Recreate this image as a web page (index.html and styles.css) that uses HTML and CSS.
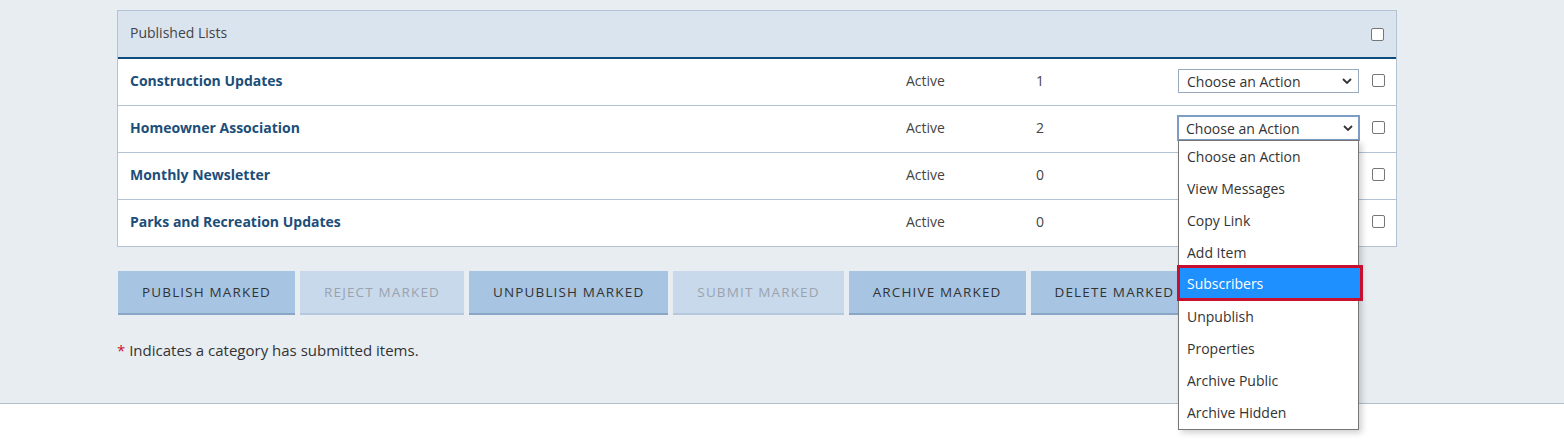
FILE: index.html
```html
<!DOCTYPE html>
<html lang="en">
<head>
    <meta charset="UTF-8">
    <meta name="viewport" content="width=device-width, initial-scale=1.0">
    <title>Published Lists</title>
    <link rel="stylesheet" href="styles.css">
</head>
<body>
    <div class="page">
        <div class="lists">
            <div class="lists-head">
                <span class="head-title">Published Lists</span>
                <span class="box"></span>
            </div>

            <div class="list-row">
                <a href="#" class="list-name">Construction Updates</a>
                <span class="cell">Active</span>
                <span class="cell">1</span>
                <span class="cell"><span class="action">Choose an Action<svg class="caret" viewBox="0 0 10 6" width="10" height="6"><path d="M1 1l4 4 4-4" fill="none" stroke="#333" stroke-width="1.8"/></svg></span></span>
                <span class="cell-box"><span class="box"></span></span>
            </div>

            <div class="list-row">
                <a href="#" class="list-name">Homeowner Association</a>
                <span class="cell">Active</span>
                <span class="cell">2</span>
                <span class="cell action-cell">
                    <span class="action action-open">Choose an Action<svg class="caret" viewBox="0 0 10 6" width="10" height="6"><path d="M1 1l4 4 4-4" fill="none" stroke="#333" stroke-width="1.8"/></svg></span>
                    <ul class="action-menu">
                        <li>Choose an Action</li>
                        <li>View Messages</li>
                        <li>Copy Link</li>
                        <li>Add Item</li>
                        <li class="selected">Subscribers</li>
                        <li>Unpublish</li>
                        <li>Properties</li>
                        <li>Archive Public</li>
                        <li>Archive Hidden</li>
                    </ul>
                </span>
                <span class="cell-box"><span class="box"></span></span>
            </div>

            <div class="list-row">
                <a href="#" class="list-name">Monthly Newsletter</a>
                <span class="cell">Active</span>
                <span class="cell">0</span>
                <span class="cell"></span>
                <span class="cell-box"><span class="box"></span></span>
            </div>

            <div class="list-row">
                <a href="#" class="list-name">Parks and Recreation Updates</a>
                <span class="cell">Active</span>
                <span class="cell">0</span>
                <span class="cell"></span>
                <span class="cell-box"><span class="box"></span></span>
            </div>
        </div>

        <div class="buttons">
            <button class="btn">Publish Marked</button>
            <button class="btn btn-off">Reject Marked</button>
            <button class="btn">Unpublish Marked</button>
            <button class="btn btn-off">Submit Marked</button>
            <button class="btn">Archive Marked</button>
            <button class="btn">Delete Marked</button>
        </div>

        <p class="note"><span class="star">*</span> Indicates a category has submitted items.</p>
    </div>
    <div class="footer"></div>
</body>
</html>
```

FILE: styles.css
```css
body {
    margin: 0;
    background-color: #fff;
    font-family: 'Open Sans', 'Liberation Sans', sans-serif;
    color: #333;
}
.page {
    position: relative;
    z-index: 2;
    background-color: #e8edf2;
    height: 404px;
    box-sizing: border-box;
    padding: 10px 167px 0 117px;
    border-bottom: 1px solid #b3bfc9;
}
.footer {
    height: 37px;
    background-color: #fff;
}
.lists {
    border: 1px solid #b4c3d3;
    background-color: #fff;
}
.lists-head {
    display: flex;
    justify-content: space-between;
    align-items: center;
    height: 46px;
    padding: 0 12px;
    background-color: #dae4ef;
    border-bottom: 2px solid #0f4c7e;
}
.head-title {
    font-size: 14px;
    color: #444;
    margin-top: -3px;
}
.list-row {
    display: grid;
    grid-template-columns: 1fr 130px 142px 193px 37px;
    align-items: center;
    height: 46px;
    border-bottom: 1px solid #b4c3d3;
}
.list-row:last-child {
    border-bottom: none;
}
.list-name {
    padding-left: 12px;
    font-size: 14px;
    font-weight: bold;
    color: #1b4e79;
    text-decoration: none;
    margin-top: -3px;
}
.cell {
    padding-left: 12px;
    font-size: 14px;
    color: #444;
    margin-top: -3px;
}
.cell-box {
    padding-left: 13px;
    display: flex;
    margin-top: -4px;
}
.box {
    display: inline-block;
    width: 11px;
    height: 11px;
    border: 1px solid #767676;
    border-radius: 2px;
    background-color: #fff;
}
.action {
    display: flex;
    justify-content: space-between;
    align-items: center;
    box-sizing: border-box;
    width: 181px;
    height: 24px;
    margin-top: 1px;
    padding: 0 6px 0 8px;
    border: 1px solid #98aabb;
    font-size: 14px;
    color: #333;
    background-color: #fff;
}
.action-open {
    border: 2px solid #7d9dc5;
    width: 183px;
    height: 26px;
    margin-left: -1px;
    padding: 0 5px 0 7px;
}
.action-cell {
    position: relative;
}
.action-menu {
    position: absolute;
    top: 26px;
    left: 12px;
    width: 179px;
    margin: 0;
    padding: 0;
    list-style: none;
    background-color: #fff;
    border: 1px solid #767676;
    box-shadow: 3px 3px 6px rgba(0, 0, 0, 0.18);
    z-index: 5;
}
.action-menu li {
    height: 32px;
    line-height: 32px;
    padding-left: 8px;
    font-size: 14px;
    color: #333;
}
.action-menu li.selected {
    background-color: #1e90ff;
    color: #fff;
    margin: -4px -5px 0 -2px;
    padding-left: 7px;
    height: 30px;
    line-height: 31px;
    border: 3px solid #c8102e;
}
.buttons {
    display: flex;
    gap: 5px;
    margin-top: 24px;
    padding-left: 1px;
}
.btn {
    height: 44px;
    padding: 0 24px;
    border: none;
    border-bottom: 2px solid #8aa6c6;
    background-color: #a7c5e3;
    font-family: 'Open Sans', 'Liberation Sans', sans-serif;
    font-size: 13.5px;
    letter-spacing: 1.15px;
    text-transform: uppercase;
    color: #333;
    cursor: pointer;
}
.btn-off {
    background-color: #c8d9ec;
    border-bottom-color: #b5c8dc;
    color: #9aa3ad;
}
.note {
    margin: 25px 0 0 0;
    font-size: 15px;
    color: #333;
}
.star {
    color: #c8102e;
}
```
